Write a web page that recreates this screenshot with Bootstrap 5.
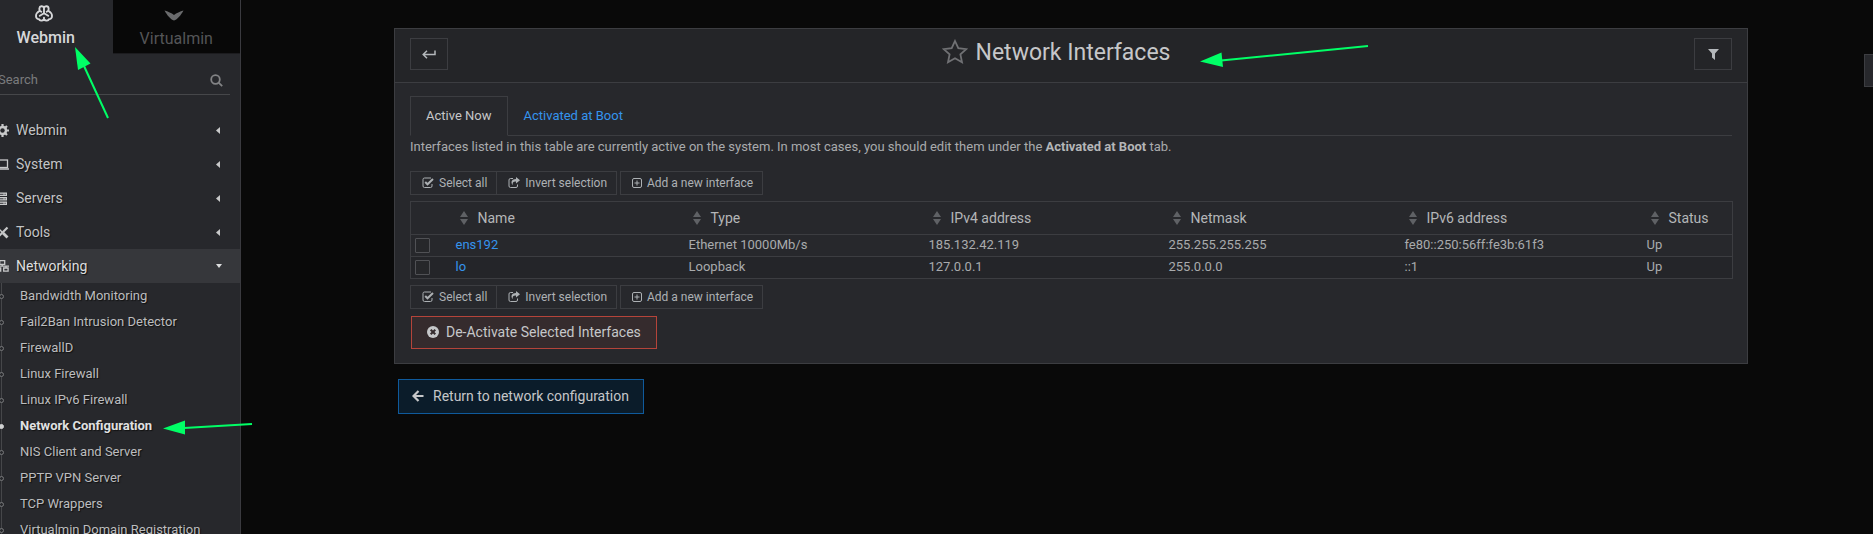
<!DOCTYPE html>
<html lang="en">
<head>
<meta charset="utf-8">
<meta name="viewport" content="width=device-width, initial-scale=1">
<title>Network Interfaces</title>
<link href="https://cdn.jsdelivr.net/npm/bootstrap@5.3.0/dist/css/bootstrap.min.css" rel="stylesheet">
<style>
:root { --panel:#27282c; --edge:#3c3d41; --txt:#b9bbbd; --link:#3594ee; }
body { background:#090909; color:var(--txt); font-family:Roboto,"Liberation Sans",sans-serif; font-size:13px; line-height:18px; overflow:hidden; }
a { color:var(--link); text-decoration:none; }
svg { display:block; flex:none; }
.shell { min-height:100vh; height:100vh; overflow:hidden; position:relative; }
.side { width:259px; margin-left:-18px; flex:none; background:var(--panel); border-right:1px solid #3a3a3f; overflow:hidden; text-shadow:1px 1px 1px #111; }
.side-tabs { height:54px; }
.side-tab { flex:1; border:0; background:var(--panel); color:#d6d7d9; font-size:16px; font-weight:500; line-height:22px; padding:5px 3px 0 0; gap:5px; }
.side-tab.off { background:#080808; color:#545557; font-weight:400; border-bottom:1px solid #1c1c1f; text-shadow:none; padding:6px 0 0; gap:6px; }
.search-line { margin:12px 10px 0 16px; border-bottom:1px solid #46474a; height:29px; padding-right:7px; }
.search-line input { background:none; border:0; outline:0; color:var(--txt); padding:0; font-size:13px; min-width:0; }
.search-line input::placeholder { color:#7a7b7d; opacity:1; }
.menu-list { margin-top:18px; }
.menu-item { height:34px; padding:0 20px 0 14px; color:#c3c4c6; font-size:14px; gap:3px; }
.menu-item.open { background:#36373b; color:#dddedf; padding-right:18px; }
.menu-item svg { color:#c8c9ca; }
.menu-sub { margin-left:19px; border-left:1px solid #46474a; }
.menu-sub a { height:26px; padding-left:18px; color:#bcbdbf; position:relative; white-space:nowrap; }
.menu-sub a::before { content:""; position:absolute; left:-3px; top:11px; width:5px; height:5px; border:1px solid #77787a; border-radius:50%; background:var(--panel); }
.menu-sub a.now { color:#e0e1e2; font-weight:700; }
.menu-sub a.now::before { background:#d0d1d2; border-color:#d0d1d2; }
.main { padding:28px 125px 0 153px; min-width:0; }
.panel { background:var(--panel); border:1px solid var(--edge); padding-bottom:14px; }
.panel-top { background:#242528; border-bottom:1px solid var(--edge); padding:9px 15px 0; height:54px; }
.panel-top h1 { font-size:23px; font-weight:400; line-height:26px; color:#c6c7c9; margin:0; }
.square-btn { width:38px; height:32px; background:none; border:1px solid var(--edge); color:#b4b8bb; padding:0; }
.title-box { padding-right:30px; gap:8px; margin-top:2px; height:26px; }
.title-box svg { margin-bottom:3px; }
.panel-body { padding:13px 15px 0; }
.nav-tabs { border-bottom:1px solid var(--edge); }
.nav-tabs .nav-link { border-radius:0; padding:10px 15px; height:40px; color:var(--link); }
.nav-tabs .nav-link.active { background:var(--panel); border-color:var(--edge) var(--edge) var(--panel); color:#c6c7c9; }
.note { margin:2px 0 15px; color:#a9abad; }
.note b { font-weight:700; color:#b4b6b8; }
.tools { gap:3px; }
.tool-btn { height:24px; background:none; border:1px solid var(--edge); color:#adb1b4; padding:0 9px 0 11px; gap:5px; font-size:12px; }
.tool-btn + .tool-btn { margin-left:-1px; }
.ifaces { width:100%; table-layout:fixed; border:1px solid var(--edge); margin:6px 0; border-collapse:collapse; color:#a9abad; }
.ifaces tr { border-top:1px solid var(--edge); }
.ifaces th { height:33px; font-size:14px; font-weight:400; padding:0 0 1px 9px; color:#b4b6b8; }
.ifaces td { height:22px; padding:0 0 1px 5px; white-space:nowrap; }
.ifaces td:first-child { padding-left:4px; }
.ifaces tbody tr:last-child { background:#242529; }
.ifaces input { appearance:none; display:block; width:15px; height:15px; margin:0; border:1px solid #505155; border-radius:1px; background:#26272a; }
.sorter { gap:10px; }
.w-tick { width:40px } .w-name { width:233px } .w-type { width:240px } .w-ip4 { width:240px } .w-mask { width:236px } .w-ip6 { width:242px } .w-stat { width:91px }
.big-btn { font-size:14px; height:33px; color:#c6c7c9; padding:0 15px; }
.big-btn.stop { background:#352b2d; border:1px solid #b5443a; margin:7px 0 0 1px; padding-bottom:1px; gap:7px; }
.big-btn.ret { height:35px; background:#0b1c2a; border:1px solid #0f5a9c; margin:15px 0 0 4px; gap:9px; padding:0 14px 1px 13px; }
.edge-tab { position:absolute; right:0; top:54px; width:9px; height:33px; background:var(--panel); border:1px solid var(--edge); border-right:0; padding:0; }
.pointer { position:absolute; left:0; top:0; pointer-events:none; overflow:visible; }
</style>
</head>
<body>
<svg width="0" height="0" class="position-absolute" aria-hidden="true">
  <symbol id="i-check" viewBox="0 0 12 12"><path d="M9 1H2.5A1.5 1.5 0 0 0 1 2.500V9A1.5 1.500 0 0 0 2.500 10.500H8.500A1.500 1.500 0 0 0 10 9V7" fill="none" stroke="currentColor"/><path d="M3.200 5l2.300 2.300L11 2" fill="none" stroke="currentColor" stroke-width="2"/></symbol>
  <symbol id="i-invert" viewBox="0 0 12 12"><path d="M5 1.500H2.500A1.500 1.500 0 0 0 1 3V9a1.500 1.500 0 0 0 1.500 1.500H8A1.500 1.500 0 0 0 9.500 9V7.500" fill="none" stroke="currentColor"/><path d="M8 0l4 3.200L8 6.500V4.500C5.500 4.300 4.500 5 4.700 8 2.200 5 4 2 8 2z" fill="currentColor"/></symbol>
  <symbol id="i-plus" viewBox="0 0 10 10"><rect x=".5" y=".5" width="9" height="9" rx="1.500" fill="none" stroke="currentColor"/><path d="M5 2.500v5M2.500 5h5" stroke="currentColor"/></symbol>
  <symbol id="i-sort" viewBox="0 0 8 14"><path d="M4 0l4 6H0zM0 8h8l-4 6z" fill="#5f6165"/></symbol>
  <symbol id="i-left" viewBox="0 0 4 7"><path d="M4 0v7L0 3.500z" fill="currentColor"/></symbol>
</svg>

<div class="shell d-flex">
  <aside class="side">
    <div class="side-tabs d-flex">
      <button class="side-tab d-flex flex-column align-items-center">
        <svg width="18" height="17" viewBox="0 0 18 17" class="me-1" fill="none" stroke="currentColor" stroke-width="1.900" stroke-linecap="round" stroke-linejoin="round"><path d="M9 2.600C8 .8 4.700 .6 4.400 3.400c-.1 1 .1 1.500.3 2.300C2.800 6.800 1 8.500 1 11c0 2 1.300 3.300 3 3.200.6 1.600 3.300 2 5 .3 1.700 1.700 4.400 1.300 5-.3 1.700.1 3-1.200 3-3.200 0-2.500-1.800-4.200-3.700-5.300.2-.8.400-1.300.3-2.300C13.300.6 10 .8 9 2.600zM9 2.600v5.600M9 8.200l-4.200 2.600M9 8.200l4.200 2.600M4.700 5.700l1.600 1M13.300 5.700l-1.600 1M9 14.500v-1.700"/></svg>
        <span>Webmin</span>
      </button>
      <button class="side-tab off d-flex flex-column align-items-center">
        <svg width="20" height="16" viewBox="0 0 20 16" class="me-1"><path d="M.5 4.500C4 5.500 7.500 7 10 9 12.500 7 16 5.500 19.500 4.500 17 9 13.500 13.500 10 14.500 6.500 13.500 3 9 .5 4.500z" fill="#6a6b6d"/></svg>
        <span>Virtualmin</span>
      </button>
    </div>
    <label class="search-line d-flex align-items-center">
      <input type="text" placeholder="Search" aria-label="Search" class="flex-grow-1">
      <svg width="13" height="13" viewBox="0 0 13 13" fill="none" stroke="#828385" stroke-width="1.800"><circle cx="5.500" cy="5.500" r="4.300"/><path d="M8.600 8.600l3.600 3.600"/></svg>
    </label>
    <nav class="menu-list">
      <a href="#" class="menu-item d-flex align-items-center"><svg width="13" height="13" viewBox="0 0 13 13"><circle cx="6.500" cy="6.500" r="3.500" fill="none" stroke="currentColor" stroke-width="2.600"/><path d="M6.500 0v13M0 6.500h13M2 2l9 9M11 2l-9 9" stroke="currentColor" stroke-width="2.200"/><circle cx="6.500" cy="6.500" r="2.200" fill="#27282c"/></svg><span class="flex-grow-1 ps-1">Webmin</span><svg width="4" height="7"><use href="#i-left"/></svg></a>
      <a href="#" class="menu-item d-flex align-items-center"><svg width="13" height="11" viewBox="0 0 13 11" fill="none" stroke="currentColor"><rect x="1.500" y="1" width="10" height="7.500" stroke-width="1.300"/><path d="M0 10h13" stroke-width="1.500"/></svg><span class="flex-grow-1 ps-1">System</span><svg width="4" height="7"><use href="#i-left"/></svg></a>
      <a href="#" class="menu-item d-flex align-items-center"><svg width="13" height="13" viewBox="0 0 13 13"><path d="M1 .5h10v3.500H1zM1 5h10v3.500H1zM1 9.500h10V13H1z" fill="currentColor"/><path d="M2.500 2.300h5M2.500 6.800h5M2.500 11.300h5M8.500 2.300h1.200M8.500 6.800h1.200M8.500 11.300h1.200" stroke="#27282c" stroke-width=".9"/></svg><span class="flex-grow-1 ps-1">Servers</span><svg width="4" height="7"><use href="#i-left"/></svg></a>
      <a href="#" class="menu-item d-flex align-items-center"><svg width="13" height="13" viewBox="0 0 13 13" fill="none" stroke="currentColor"><path d="M1 12L11.500 1.500" stroke-width="2.200"/><path d="M1 1l5 5" stroke-width="1.500"/><path d="M7 7l4.500 4.500" stroke-width="2.800"/></svg><span class="flex-grow-1 ps-1">Tools</span><svg width="4" height="7"><use href="#i-left"/></svg></a>
      <a href="#" class="menu-item open d-flex align-items-center"><svg width="13" height="12" viewBox="0 0 13 12" fill="none" stroke="currentColor" stroke-width="1.300"><path d="M3.700.7h5v3.600h-5zM.7 8h4v3.200h-4zM7.700 8h4.400v3.200H7.700zM6.200 4.300v2M0 6.200h13M2.700 6.200V8M10 6.200V8"/></svg><span class="flex-grow-1 ps-1">Networking</span><svg width="6" height="4" viewBox="0 0 6 4"><path d="M0 0h6L3 4z" fill="#dddedf"/></svg></a>
      <div class="menu-sub">
        <a href="#" class="d-flex align-items-center">Bandwidth Monitoring</a>
        <a href="#" class="d-flex align-items-center">Fail2Ban Intrusion Detector</a>
        <a href="#" class="d-flex align-items-center">FirewallD</a>
        <a href="#" class="d-flex align-items-center">Linux Firewall</a>
        <a href="#" class="d-flex align-items-center">Linux IPv6 Firewall</a>
        <a href="#" class="d-flex align-items-center now">Network Configuration</a>
        <a href="#" class="d-flex align-items-center">NIS Client and Server</a>
        <a href="#" class="d-flex align-items-center">PPTP VPN Server</a>
        <a href="#" class="d-flex align-items-center">TCP Wrappers</a>
        <a href="#" class="d-flex align-items-center">Virtualmin Domain Registration</a>
      </div>
    </nav>
  </aside>

  <main class="main flex-grow-1">
    <section class="panel">
      <header class="panel-top d-flex align-items-start">
        <button class="square-btn d-flex align-items-center justify-content-center" aria-label="Back"><svg width="14" height="9" viewBox="0 0 14 9" fill="none" stroke="currentColor" stroke-width="1.500"><path d="M13 .5V4.500H1.500M5 .7L1.200 4.500 5 8.300"/></svg></button>
        <div class="title-box d-flex flex-grow-1 justify-content-center align-items-center">
          <svg width="26" height="25" viewBox="0 0 26 25" fill="none" stroke="#707174" stroke-width="1.800"><path d="M13 2l3.300 7.200 8 .9-5.900 5.300 1.600 7.800-7-3.900-7 3.900 1.600-7.800L1.700 10.100l8-.9z"/></svg>
          <h1>Network Interfaces</h1>
        </div>
        <button class="square-btn d-flex align-items-center justify-content-center" aria-label="Filter"><svg width="11" height="11" viewBox="0 0 11 11"><path d="M0 0h11L7 4.500V11L4 8.500v-4z" fill="currentColor"/></svg></button>
      </header>
      <div class="panel-body">
        <ul class="nav nav-tabs">
          <li class="nav-item"><a class="nav-link active" href="#">Active Now</a></li>
          <li class="nav-item"><a class="nav-link" href="#">Activated at Boot</a></li>
        </ul>
        <p class="note">Interfaces listed in this table are currently active on the system. In most cases, you should edit them under the <b>Activated at Boot</b> tab.</p>
        <div class="tools d-flex">
          <div class="d-flex">
            <button class="tool-btn d-flex align-items-center"><svg width="12" height="12"><use href="#i-check"/></svg>Select all</button>
            <button class="tool-btn d-flex align-items-center"><svg width="12" height="12"><use href="#i-invert"/></svg>Invert selection</button>
          </div>
          <button class="tool-btn d-flex align-items-center m-0"><svg width="10" height="10"><use href="#i-plus"/></svg>Add a new interface</button>
        </div>
        <table class="ifaces">
          <colgroup><col class="w-tick"><col class="w-name"><col class="w-type"><col class="w-ip4"><col class="w-mask"><col class="w-ip6"><col class="w-stat"></colgroup>
          <thead><tr>
            <th></th>
            <th><span class="sorter d-flex align-items-center"><svg width="8" height="14"><use href="#i-sort"/></svg>Name</span></th>
            <th><span class="sorter d-flex align-items-center"><svg width="8" height="14"><use href="#i-sort"/></svg>Type</span></th>
            <th><span class="sorter d-flex align-items-center"><svg width="8" height="14"><use href="#i-sort"/></svg>IPv4 address</span></th>
            <th><span class="sorter d-flex align-items-center"><svg width="8" height="14"><use href="#i-sort"/></svg>Netmask</span></th>
            <th><span class="sorter d-flex align-items-center"><svg width="8" height="14"><use href="#i-sort"/></svg>IPv6 address</span></th>
            <th><span class="sorter d-flex align-items-center"><svg width="8" height="14"><use href="#i-sort"/></svg>Status</span></th>
          </tr></thead>
          <tbody>
            <tr><td><input type="checkbox" aria-label="ens192"></td><td><a href="#">ens192</a></td><td>Ethernet 10000Mb/s</td><td>185.132.42.119</td><td>255.255.255.255</td><td>fe80::250:56ff:fe3b:61f3</td><td>Up</td></tr>
            <tr><td><input type="checkbox" aria-label="lo"></td><td><a href="#">lo</a></td><td>Loopback</td><td>127.0.0.1</td><td>255.0.0.0</td><td>::1</td><td>Up</td></tr>
          </tbody>
        </table>
        <div class="tools d-flex">
          <div class="d-flex">
            <button class="tool-btn d-flex align-items-center"><svg width="12" height="12"><use href="#i-check"/></svg>Select all</button>
            <button class="tool-btn d-flex align-items-center"><svg width="12" height="12"><use href="#i-invert"/></svg>Invert selection</button>
          </div>
          <button class="tool-btn d-flex align-items-center m-0"><svg width="10" height="10"><use href="#i-plus"/></svg>Add a new interface</button>
        </div>
        <button class="big-btn stop d-flex align-items-center"><svg width="12" height="12" viewBox="0 0 12 12"><circle cx="6" cy="6" r="6" fill="currentColor"/><path d="M3.700 3.700l4.600 4.600M8.300 3.700L3.700 8.300" stroke="#352b2d" stroke-width="2"/></svg>De-Activate Selected Interfaces</button>
      </div>
    </section>
    <button class="big-btn ret d-flex align-items-center"><svg width="12" height="12" viewBox="0 0 12 12" fill="none" stroke="currentColor" stroke-width="2.200"><path d="M11.500 6H2M6.500 1L1.500 6l5 5"/></svg>Return to network configuration</button>
  </main>
  <button class="edge-tab" aria-label="Open side panel"></button>

  <!-- annotation arrows -->
  <svg class="pointer" width="1400" height="440" stroke="#00ff66" fill="#00ff66" stroke-width="2" aria-hidden="true">
    <path d="M84 66L108 118" fill="none"/><path d="M75 47l15.500 16.500L78 70z" stroke="none"/>
    <path d="M184 428L252 424" fill="none"/><path d="M163 428.500l22-8v14z" stroke="none"/>
    <path d="M1221 60.500L1368 46" fill="none"/><path d="M1200 61.500l21.500-9 1.500 14.500z" stroke="none"/>
  </svg>
</div>
<script src="https://cdn.jsdelivr.net/npm/bootstrap@5.3.0/dist/js/bootstrap.bundle.min.js"></script>
</body>
</html>
